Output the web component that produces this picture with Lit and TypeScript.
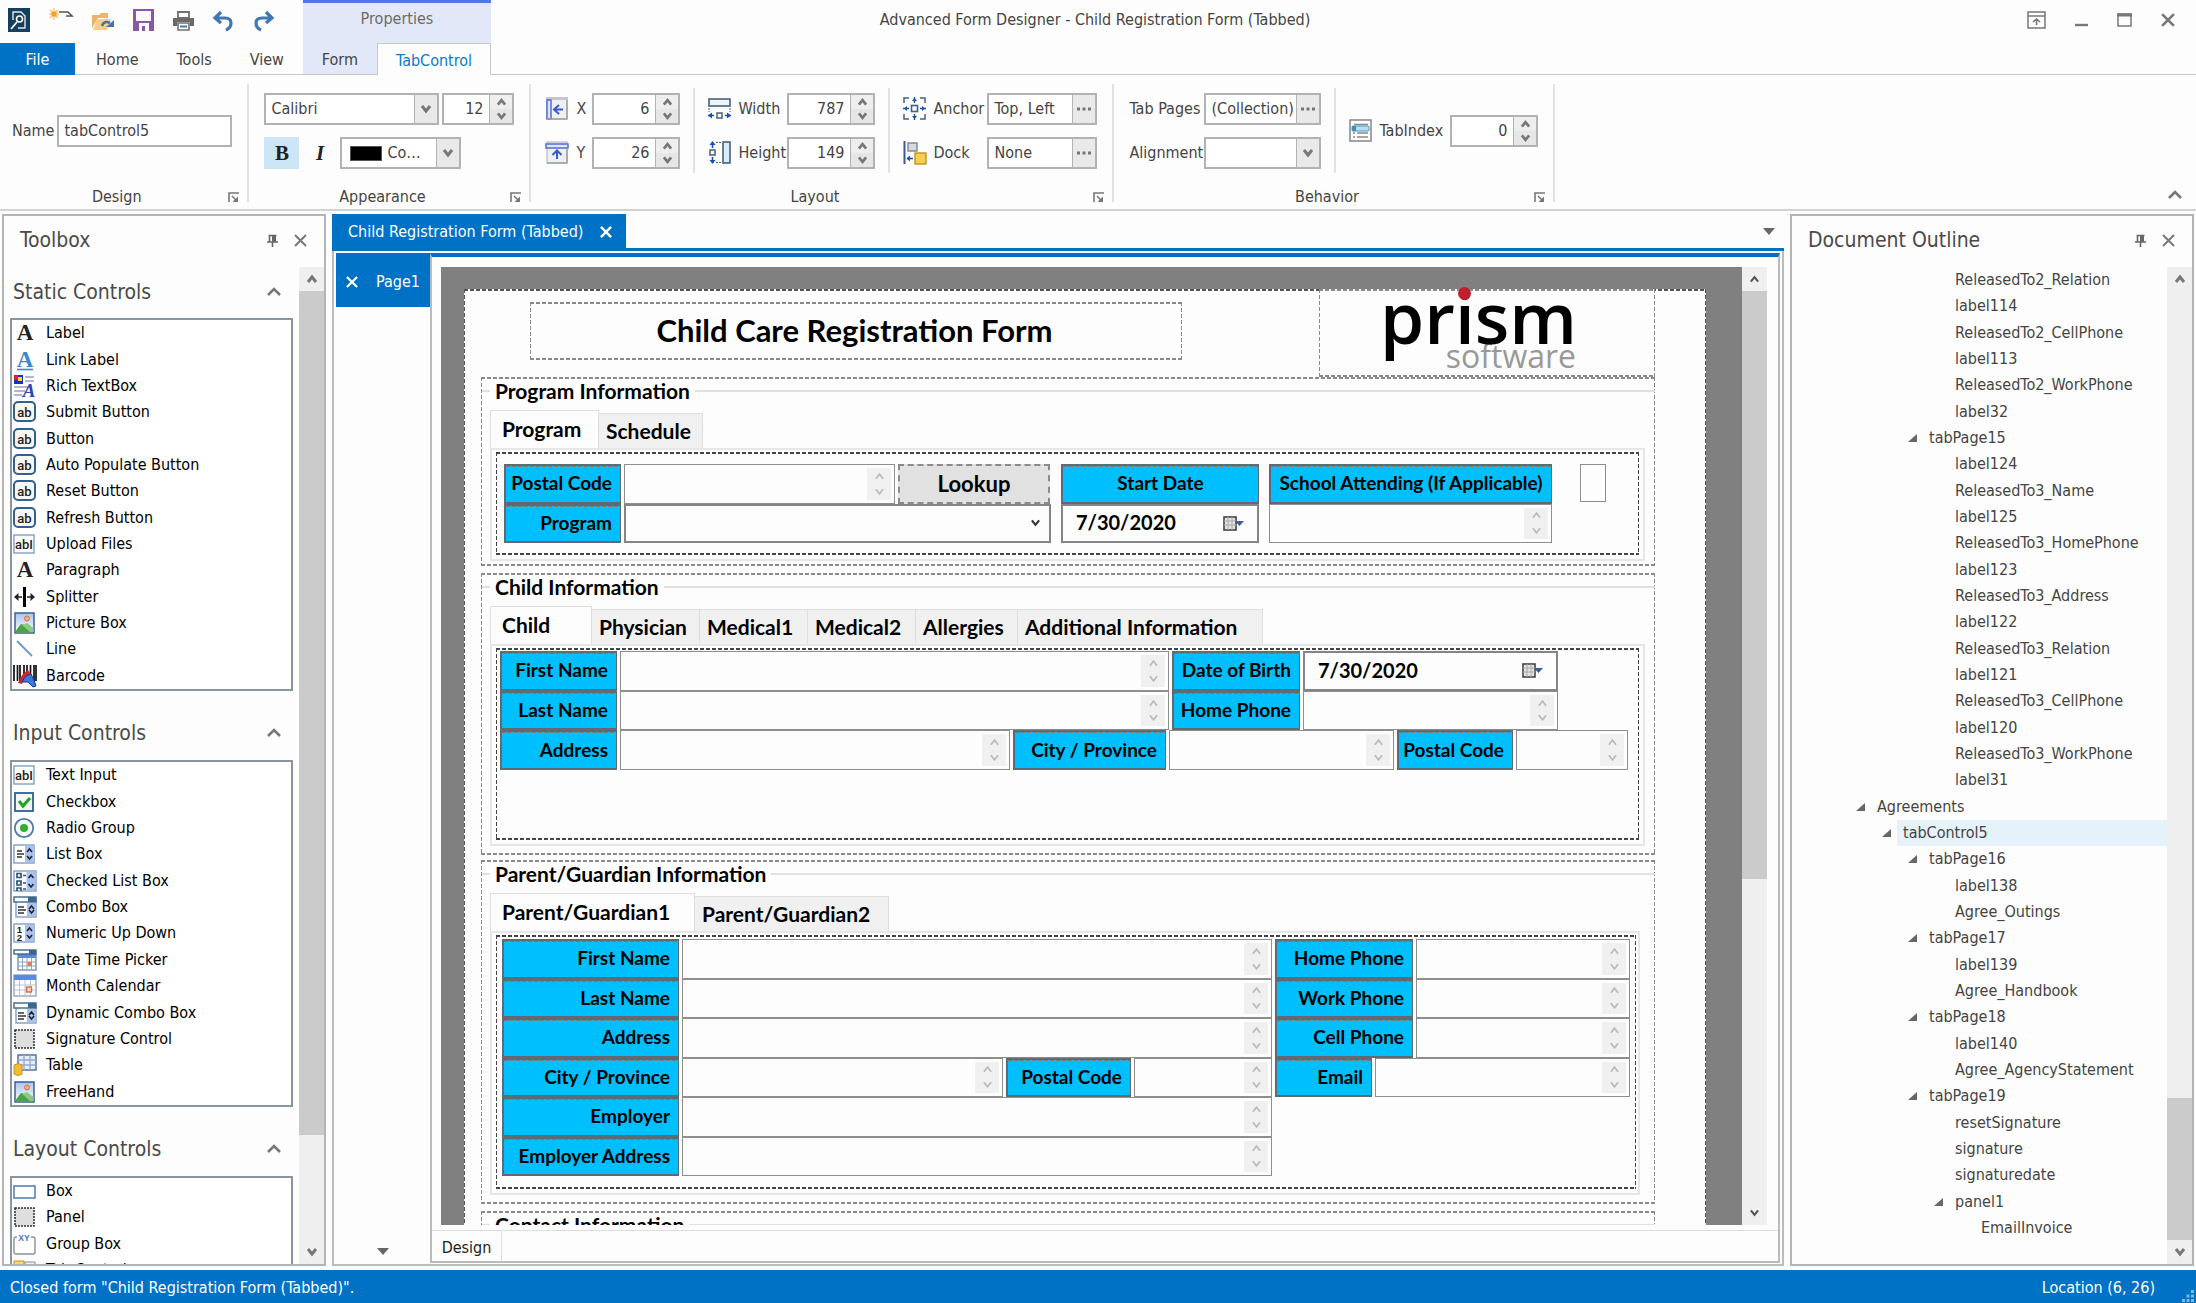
import { LitElement, html, svg, css, TemplateResult } from "lit";
import { customElement } from "lit/decorators.js";
import { classMap } from "lit/directives/class-map.js";

const base = css`
  * { box-sizing: border-box; }
  :host {
    --ui: "DejaVu Sans Condensed", "Noto Sans", sans-serif;
    --form: Lato, "Noto Sans", sans-serif;
    --blue: #0072c6;
    font-family: var(--ui);
    font-size: 16px;
    line-height: 20px;
    color: #444;
  }
  button, input, select {
    font: inherit;
    color: inherit;
    margin: 0;
    padding: 0;
    border: 0;
    border-radius: 0;
    background: none;
    min-width: 0;
    outline: none;
  }
  button { display: flex; align-items: center; justify-content: center; }
  select { appearance: none; }
  svg { display: block; flex: none; overflow: visible; }
  ul { list-style: none; margin: 0; padding: 0; }
  h1, h2, h3 { margin: 0; font: inherit; }
`;

const icon = (w: number, h: number, body: unknown, vb = `0 0 ${w} ${h}`) =>
  html`<svg width=${w} height=${h} viewBox=${vb} fill="none" aria-hidden="true">${body}</svg>`;

const chevron = (dir: "up" | "down", w = 10, color = "#777", sw = 3) =>
  icon(w, 8, dir === "up"
    ? svg`<path d="M1 7 L5 2 L9 7" stroke=${color} stroke-width=${sw} />`
    : svg`<path d="M1 1 L5 6 L9 1" stroke=${color} stroke-width=${sw} />`, "0 0 10 8");

const closeX = (color = "#777", s = 13, w = 2) =>
  icon(s, s, svg`<path d="M1 1 L12 12 M12 1 L1 12" stroke=${color} stroke-width=${w} />`, "0 0 13 13");

const pin = () => icon(11, 13, svg`<path d="M2.500 1 V8 M1.500 1.500 H9.500 M0 8 H11 M5.500 8 V13" stroke="#666" stroke-width="1.6"/><path d="M5 1 H9 V8 H5 Z" fill="#666"/>`);

const wideCaret = (dir: "up" | "down") =>
  icon(14, 9, dir === "up"
    ? svg`<path d="M1 8 L7 2 L13 8" stroke="#777" stroke-width="2.6"/>`
    : svg`<path d="M1 1 L7 7 L13 1" stroke="#777" stroke-width="2.6"/>`);

const scrollCss = css`
  .scroll { width: 25px; background: #efefef; display: flex; flex-direction: column; flex: none; }
  .scroll button { height: 24px; width: 100%; flex: none; }
  .track { flex: 1; display: flex; flex-direction: column; min-height: 0; }
  .thumb { background: #cbcbcb; }
  .panel { border: 2px solid #b4b4b4; background: #fdfdfd; display: flex; flex-direction: column; min-height: 0; }
  .panel-head { height: 51px; display: flex; align-items: center; padding: 0 17px 3px 16px; gap: 16px; flex: none; }
  .panel-head h2 { flex: 1; font-size: 21px; line-height: 28px; color: #4a4a4a; }
  .panel-body { flex: 1; display: flex; min-height: 0; }
`;

/* ---------- Ribbon ---------- */

const ribbonIcons = {
  app: icon(22, 24, svg`<rect width="22" height="24" fill="#14405f"/><path d="M5 12 V4 H13 L17 8 V20 H10" stroke="#dfe8ee" stroke-width="1.4"/><circle cx="11.500" cy="11" r="3" stroke="#fff" stroke-width="1.6"/><path d="M9 14 L3 21" stroke="#fff" stroke-width="1.8"/>`),
  fresh: icon(24, 24, svg`<path d="M10 4 H19 L23 8 H17" stroke="#555" stroke-width="1.6"/><path d="M1 2 L9 10 M9 2 L1 10 M5 0 V12 M0 6 H10" stroke="#fcc77a" stroke-width="1.4"/><rect x="2.500" y="3.500" width="5" height="5" fill="#f9a01e"/>`),
  open: icon(22, 21, svg`<path d="M0 18 V5 H7 L9 3 H16 V8 H6 Z" fill="#e9b566"/><path d="M1 20 L5 9 H19 L15 20 Z" fill="#f7cf8b"/><path d="M10 16 Q12 10 18 13" stroke="#3f77ad" stroke-width="2.600"/><path d="M14 17 H22 V10 Z" fill="#3f77ad"/>`),
  save: icon(21, 22, svg`<path d="M0 0 H21 V22 H0 Z M3 2 V12 H18 V2 Z M6 14 V22 H9 V17 H12 V22 H16 V14 Z" fill="#8a56a6" fill-rule="evenodd"/><path d="M3 2 H18 V12 H3 Z" fill="#fbf7fd"/>`),
  print: icon(21, 21, svg`<path d="M5 2 H16 V8 H5 Z" stroke="#707070" stroke-width="1.8" fill="#fff"/><path d="M0 8 H21 V16 H17 V12 H4 V16 H0 Z" fill="#6a6a6a"/><path d="M5 13 H16 V20 H5 Z" stroke="#707070" stroke-width="1.6" fill="#fff"/><path d="M7 16.500 H14" stroke="#3f77ad" stroke-width="2"/>`),
  undo: icon(21, 21, svg`<path d="M8 2 L2 8 L8 13 M2 8 H12 Q18 8 18 13 Q18 18 13 20" stroke="#3f77b4" stroke-width="3.200"/>`),
  redo: icon(21, 21, svg`<path d="M13 2 L19 8 L13 13 M19 8 H9 Q3 8 3 13 Q3 18 8 20" stroke="#3f77b4" stroke-width="3.200"/>`),
  x: icon(22, 23, svg`<rect x="1" y="1" width="20" height="21" fill="#eef0f4" stroke="#a9adb5"/><rect x="0" y="0" width="22" height="3" fill="#c3c6cc"/><rect x="1" y="3" width="4" height="19" fill="#dfe7ff" stroke="#4a63d6" stroke-width="1.4"/><path d="M17 12.500 H9 M13 8 L8 12.500 L13 17" stroke="#3a5bd0" stroke-width="2"/><path d="M1 22 H21 V3" stroke="#9da1a8" stroke-width="1.5"/>`),
  y: icon(22, 23, svg`<rect x="1" y="1" width="20" height="21" fill="#eef0f4" stroke="#a9adb5"/><rect x="0" y="3" width="22" height="4" fill="#dfe7ff" stroke="#4a63d6" stroke-width="1.4"/><path d="M11 18 V10 M6.500 14 L11 9.500 L15.500 14" stroke="#3a5bd0" stroke-width="2"/><path d="M1 22 H21 V7" stroke="#9da1a8" stroke-width="1.5"/>`),
  width: icon(23, 22, svg`<rect x="1" y="1" width="21" height="7" fill="#eef6fb" stroke="#45617c" stroke-width="1.6"/><path d="M1 10 V14 M22 10 V14" stroke="#45617c" stroke-dasharray="2 1"/><rect x="9" y="15" width="5" height="5" stroke="#45617c" stroke-width="1.5"/><path d="M0 17.500 H6 M17 17.500 H23" stroke="#1c4fb5" stroke-width="1.6"/><path d="M4 14.500 L0 17.500 L4 20.500 Z M19 14.500 L23 17.500 L19 20.500 Z" fill="#1c4fb5"/>`),
  height: icon(23, 23, svg`<rect x="15" y="1" width="7" height="21" fill="#d8ecf8" stroke="#45617c" stroke-width="1.6"/><path d="M8 1.500 H13 M8 21.500 H13" stroke="#45617c" stroke-dasharray="2 1"/><rect x="2" y="9" width="5" height="5" stroke="#45617c" stroke-width="1.5"/><path d="M4.500 1 V7 M4.500 16 V22" stroke="#1c4fb5" stroke-width="1.6"/><path d="M1.500 4 L4.500 0 L7.500 4 Z M1.500 19 L4.500 23 L7.500 19 Z" fill="#1c4fb5"/>`),
  anchor: icon(23, 23, svg`<path d="M1 6 V1 H6 M17 1 H22 V6 M22 17 V22 H17 M6 22 H1 V17" stroke="#45617c" stroke-width="1.5"/><rect x="8.500" y="8.500" width="6" height="6" stroke="#45617c" stroke-width="1.6"/><path d="M11.500 0 V6 M11.500 17 V23 M0 11.500 H6 M17 11.500 H23" stroke="#1c4fb5" stroke-width="1.4"/><path d="M9 4 L11.500 1 L14 4 Z M9 19 L11.500 22 L14 19 Z M4 9 L1 11.500 L4 14 Z M19 9 L22 11.500 L19 14 Z" fill="#1c4fb5"/>`),
  dock: icon(23, 23, svg`<path d="M1.500 0 V23" stroke="#3a5b8c" stroke-width="2"/><rect x="5" y="2" width="9" height="8" fill="#d6dade" stroke="#7b838c" stroke-width="1.4"/><rect x="12" y="12" width="11" height="11" fill="#f6cf4c" stroke="#bf9222" stroke-width="1.4"/><path d="M4 17.500 H10" stroke="#1c4fb5" stroke-width="1.6"/><path d="M7 14.500 L3.500 17.500 L7 20.500 Z" fill="#1c4fb5"/>`),
  tabIndex: icon(23, 23, svg`<rect x="1" y="1" width="21" height="21" fill="#fff" stroke="#8d8d8d" stroke-width="1.6"/><path d="M5 5.500 H19 M4 14 H6 M4 18 H6 M8 14 H19 M8 18 H19" stroke="#888" stroke-width="1.6"/><rect x="3" y="7" width="17" height="5" rx="1" fill="#b9def0" stroke="#4a97c4"/><rect x="3" y="7" width="4" height="5" fill="#3b8fc4"/>`),
};

const launcher = (name: string) => html`<button aria-label=${name + " options"}>
  ${icon(11, 11, svg`<path d="M1 10 V1 H11" stroke="#777" stroke-width="1.6"/><path d="M4 4 L9 9" stroke="#777" stroke-width="1.5"/><path d="M10 4.500 V10 H4.500 Z" fill="#777"/>`)}</button>`;

const dots = () => icon(14, 4, svg`<path d="M0 .5 h3 v3 h-3 Z M5.500 .5 h3 v3 h-3 Z M11 .5 h3 v3 h-3 Z" fill="#777"/>`);

@customElement("ribbon-bar")
class RibbonBar extends LitElement {
  static styles = [base, css`
    :host { display: block; background: #fdfdfd; }
    .top { display: grid; grid-template-columns: auto auto 1fr; grid-template-rows: 43px 32px; }
    .quick { grid-area: 1 / 1; display: flex; gap: 19px; padding-left: 8px; align-items: center; }
    .quick button { padding-bottom: 3px; }
    .caption { grid-area: 1 / 1 / 2 / 4; justify-self: center; align-self: center; padding: 0 6px 3px 0; pointer-events: none; }
    .win { grid-area: 1 / 3; justify-self: end; display: flex; align-items: center; gap: 29px; padding: 0 21px 3px 0; }
    .ctx { grid-area: 1 / 2; background: #e3e8f9; border-top: 3px solid #4f78e4; display: flex; align-items: center; justify-content: center; padding-bottom: 8px; color: #6a6a6a; }
    .tabs { display: flex; border-bottom: 1px solid #c8c8c8; }
    .tabs button { padding: 3px 19px 0; }
    .tabs .file { background: var(--blue); color: #fff; width: 75px; padding: 2px 0 0; margin: 0 2px -1px 0; }
    .tabs.context button { background: #e3e8f9; }
    .tabs.context .on { background: #fdfdfd; color: #0a7bcb; border: 1px solid #c8c8c8; border-bottom: 0; margin-bottom: -1px; padding: 2px 18px 0; }
    .body { display: flex; height: 136px; border-bottom: 2px solid #d2d2d2; }
    .group { display: flex; flex-direction: column; }
    .rule { width: 2px; background: #e2e2e2; margin: 9px 0 7px; }
    .controls { flex: 1; display: flex; align-items: center; gap: 13px; padding: 2px 15px 0; }
    .foot { height: 25px; display: flex; align-items: center; padding: 1px 8px 0 5px; }
    .foot span { flex: 1; text-align: center; }
    .sep { width: 2px; height: 85px; background: #e2e2e2; }
    .rows { display: grid; row-gap: 12px; align-items: center; grid-auto-rows: 32px; }
    .rows.xy { grid-template-columns: 30px 16px 88px; }
    .rows.size { grid-template-columns: 30px 49px 88px; }
    .rows.place { grid-template-columns: 30px 54px 110px; }
    .rows.pages { grid-template-columns: 75px 117px; }
    .rows.index { grid-template-columns: 30px 71px 88px; }
    .line { display: flex; gap: 3px; }
    .design { gap: 3px; padding-left: 12px; }
    .field { display: flex; height: 32px; border: 2px solid #b2b2b2; background: #fff; }
    .field input { flex: 1; width: 0; padding: 0 0 0 5px; }
    .field.num input { text-align: right; padding-right: 6px; }
    .field .drop { width: 23px; flex: none; background: #e9e9e9; border-left: 1px solid #b2b2b2; }
    .field.name { width: 175px; }
    .field.font { width: 175px; }
    .field.pt { width: 72px; }
    .field.color { width: 121px; align-items: stretch; }
    .swatch { width: 32px; height: 15px; background: #000; border: 1px solid #555; margin: 7px 0 0 8px; flex: none; }
    .spin { width: 23px; flex: none; border-left: 1px solid #b2b2b2; display: flex; flex-direction: column; }
    .spin button { flex: 1; background: #eee; }
    .spin button + button { background: #e6e6e6; }
    .style { width: 35px; height: 32px; font: bold 21px/24px "Liberation Serif", serif; color: #222; }
    .style.on { background: #cce6f5; }
    .style.it { font-style: italic; }
    .end { flex: 1; display: flex; justify-content: flex-end; align-items: flex-end; padding: 0 14px 10px 0; }
  `];

  private num(id: string, value: string, cls = "") {
    return html`<div class="field num ${cls}"><input id=${id} .value=${value} aria-label=${id} />
      <div class="spin"><button aria-label="Increase">${chevron("up", 9)}</button><button aria-label="Decrease">${chevron("down", 9)}</button></div></div>`;
  }
  private pick(id: string, value: string, cls: string, glyph: TemplateResult) {
    return html`<div class="field ${cls}"><input id=${id} .value=${value} aria-label=${id} /><button class="drop" aria-label="Choose">${glyph}</button></div>`;
  }
  private group(name: string, controls: TemplateResult, cls = "") {
    return html`<section class="group"><div class="controls ${cls}">${controls}</div>
      <div class="foot"><span>${name}</span>${launcher(name)}</div></section><div class="rule"></div>`;
  }

  render() {
    const i = ribbonIcons;
    const quick: [string, TemplateResult][] = [["Application", i.app], ["New", i.fresh], ["Open", i.open], ["Save", i.save], ["Print", i.print], ["Undo", i.undo], ["Redo", i.redo]];
    return html`
      <header class="top">
        <div class="quick">${quick.map(([n, g]) => html`<button aria-label=${n}>${g}</button>`)}</div>
        <div class="ctx">Properties</div>
        <h1 class="caption">Advanced Form Designer - Child Registration Form (Tabbed)</h1>
        <div class="win">
          <button aria-label="Ribbon display">${icon(19, 18, svg`<path d="M1 1 H18 V17 H1 Z M1 5 H18" stroke="#777" stroke-width="1.5"/><path d="M9.500 14 V8 M6 11 L9.500 8 L13 11" stroke="#777" stroke-width="1.6"/>`)}</button>
          <button aria-label="Minimize">${icon(13, 14, svg`<path d="M0 12 H13" stroke="#777" stroke-width="2.4"/>`)}</button>
          <button aria-label="Maximize">${icon(15, 14, svg`<path d="M1 1 H14 V13 H1 Z" stroke="#777" stroke-width="1.5"/><path d="M0 2 H15" stroke="#777" stroke-width="3"/>`)}</button>
          <button aria-label="Close">${closeX("#777", 14, 2.4)}</button>
        </div>
        <nav class="tabs"><button class="file">File</button><button>Home</button><button>Tools</button><button>View</button></nav>
        <nav class="tabs context"><button>Form</button><button class="on">TabControl</button></nav>
        <div class="tabs"></div>
      </header>
      <div class="body">
        ${this.group("Design", html`<label for="Name">Name</label><div class="field name"><input id="Name" .value=${"tabControl5"} /></div>`, "design")}
        ${this.group("Appearance", html`<div class="rows">
          <div class="line">${this.pick("Font", "Calibri", "font", chevron("down"))}${this.num("FontSize", "12", "pt")}</div>
          <div class="line"><button class="style on">B</button><button class="style it">I</button>
            <div class="field color"><span class="swatch"></span><input aria-label="Color" .value=${"Co…"} /><button class="drop" aria-label="Choose">${chevron("down")}</button></div></div>
        </div>`)}
        ${this.group("Layout", html`
          <div class="rows xy">${i.x}<label for="X">X</label>${this.num("X", "6")}${i.y}<label for="Y">Y</label>${this.num("Y", "26")}</div>
          <div class="sep"></div>
          <div class="rows size">${i.width}<label for="Width">Width</label>${this.num("Width", "787")}${i.height}<label for="Height">Height</label>${this.num("Height", "149")}</div>
          <div class="sep"></div>
          <div class="rows place">${i.anchor}<label for="Anchor">Anchor</label>${this.pick("Anchor", "Top, Left", "", dots())}${i.dock}<label for="Dock">Dock</label>${this.pick("Dock", "None", "", dots())}</div>`)}
        ${this.group("Behavior", html`
          <div class="rows pages"><label for="TabPages">Tab Pages</label>${this.pick("TabPages", "(Collection)", "", dots())}<label for="Alignment">Alignment</label>${this.pick("Alignment", "", "", chevron("down"))}</div>
          <div class="sep"></div>
          <div class="rows index">${i.tabIndex}<label for="TabIndex">TabIndex</label>${this.num("TabIndex", "0")}</div>`)}
        <div class="end"><button aria-label="Collapse ribbon">${wideCaret("up")}</button></div>
      </div>`;
  }
}

/* ---------- Toolbox ---------- */

const abText = (t: string, x: number) => svg`<text x=${x} y="15.500" font-family="Roboto, sans-serif" font-size="13" font-weight="500" fill="#222" text-anchor="middle">${t}</text>`;
const serifA = (fill: string, extra: unknown = "") => icon(24, 22, svg`<text x="12" y="18" font-family="Liberation Serif, serif" font-size="23" font-weight="bold" fill=${fill} text-anchor="middle">A</text>${extra}`);
const updown = (x: number, y: number, h: number) => svg`<rect x=${x} y=${y} width="9" height=${h} fill="#a9c3ee"/><path d="M${x + 2} ${y + 6} l2.500 -3 l2.500 3 M${x + 2} ${y + h - 6} l2.500 3 l2.500 -3" stroke="#223" stroke-width="1.6"/>`;
const frame = (b: unknown) => icon(24, 22, svg`<rect x="1" y="2" width="20" height="18" fill="#fff" stroke="#7f9fc6" stroke-width="1.4"/>${b}`);
const combo = () => icon(24, 22, svg`<rect x="3" y="3" width="20" height="18" fill="#fff" stroke="#7f9fc6" stroke-width="1.4"/><rect x="1" y="1" width="22" height="5" fill="#fff" stroke="#3b678f" stroke-width="1.4"/><rect x="15" y="1" width="8" height="5" fill="#3b678f"/><path d="M5 11 H11 M5 14 H13 M5 17 H11" stroke="#333" stroke-width="1.4"/>${updown(14, 7, 13)}`);
const picture = () => icon(24, 22, svg`<defs><linearGradient id="sky" x2="0" y2="1"><stop stop-color="#a9c4f0"/><stop offset="1" stop-color="#fff"/></linearGradient></defs><rect x="2" y="1" width="19" height="20" fill="url(#sky)" stroke="#3b5f9c" stroke-width="1.5"/><circle cx="14" cy="6.500" r="2.500" fill="#f2b083" stroke="#d9703a"/><path d="M2.500 19 L8 12 L12 13 L20 20.500 H2.500 Z" fill="#4aa345"/><path d="M9 13 L14 11 L20.500 16 V20 H17 Z" fill="#8acb80"/>`);
const hatch = () => icon(24, 22, svg`<rect x="2" y="2" width="19" height="18" fill="#dedede" stroke="#333" stroke-width="1.6" stroke-dasharray="2 1"/>`);

const toolIcons: Record<string, () => TemplateResult> = {
  a: () => serifA("#222"),
  link: () => serifA("#3b86cf", svg`<path d="M4 20.500 H20" stroke="#3b86cf" stroke-width="1.6"/>`),
  rich: () => icon(24, 24, svg`<rect x="1" y="1" width="9" height="9" fill="#1a2ed0"/><rect x="1" y="1" width="4" height="5" fill="#d22"/><rect x="5" y="3" width="4" height="4" fill="#ffd92e"/><path d="M12 3 H21 M12 7 H21 M1 13 H15 M1 17 H12 M1 21 H9" stroke="#9aa0b8" stroke-width="1.6"/><text x="16" y="23" font-family="Liberation Serif, serif" font-size="19" font-style="italic" font-weight="bold" fill="#2c44b5" text-anchor="middle">A</text>`),
  ab: () => icon(24, 22, svg`<rect x="1" y="1" width="21" height="19" rx="4" fill="#f7f6f2" stroke="#2f6191" stroke-width="2"/>${abText("ab", 11.5)}`),
  abl: () => frame(abText("abI", 11)),
  split: () => icon(24, 22, svg`<path d="M11.500 1 V21" stroke="#000" stroke-width="3"/><path d="M2 11 H9 M14 11 H21" stroke="#222" stroke-width="1.6"/><path d="M5.500 7 L1 11 L5.500 15 Z M17.500 7 L22 11 L17.500 15 Z" fill="#222"/>`),
  picture,
  line: () => icon(24, 22, svg`<path d="M4 3 L19 18" stroke="#6d97c7" stroke-width="1.8"/>`),
  barcode: () => icon(24, 24, svg`<path d="M1 1 V17 M4.500 1 V17 M7 1 V17 M11 1 V17 M14 1 V17 M17.500 1 V17 M21 1 V17 M23 1 V17" stroke="#111" stroke-width="1.7"/><path d="M5 19 Q9 9 15 6 L18 10 Q11 13 9 20 Z" fill="#d8232a"/><path d="M9 18 Q12 11 18 10 L21 16 L23 22 L20 23 L15 18 Z" fill="#3a78e0" stroke="#123a86"/>`),
  check: () => icon(24, 22, svg`<rect x="2" y="2" width="18" height="18" fill="#f4f8f4" stroke="#2f5f8f" stroke-width="1.8"/><path d="M6 10 L10 15 L17 7" stroke="#27a227" stroke-width="3.2"/>`),
  radio: () => icon(24, 22, svg`<circle cx="11" cy="11" r="9.200" fill="#f6f9fc" stroke="#4f7ba6" stroke-width="1.8"/><circle cx="11" cy="11" r="4" fill="#2fae2f"/>`),
  list: () => frame(svg`<path d="M4 8 H9 M4 11 H11 M4 14 H9" stroke="#333" stroke-width="1.6"/>${updown(12, 3, 16)}`),
  checklist: () => icon(24, 22, svg`<rect x="1" y="1" width="22" height="20" fill="#fff" stroke="#7f9fc6" stroke-width="1.4"/><path d="M4 3.500 h4 v4 h-4 Z M4 11 h4 v4 h-4 Z M4 21 v-3 h4 v3 M10 5.500 h3 M10 13 h3 M10 19 h3" stroke="#2c5478" stroke-width="1.7"/>${updown(13.5, 2, 18)}`),
  combo,
  numeric: () => frame(svg`<text x="6.500" y="10.500" font-family="Liberation Sans" font-size="9.500" font-weight="bold" fill="#222" text-anchor="middle">1</text><text x="6.500" y="19" font-family="Liberation Sans" font-size="9.500" font-weight="bold" fill="#222" text-anchor="middle">2</text>${updown(12, 3, 16)}`),
  date: () => icon(24, 22, svg`<rect x="5" y="5" width="18" height="16" fill="#fff" stroke="#7590b8" stroke-width="1.4"/><rect x="5" y="5" width="18" height="4" fill="#5a8ae0"/><path d="M5 13 H23 M5 17 H23 M9.500 9 V21 M14 9 V21 M18.500 9 V21" stroke="#8fa5c8"/><rect x="14.500" y="13" width="4" height="4" fill="#e07a50"/><rect x="1" y="1" width="22" height="4" fill="#fff" stroke="#3b678f" stroke-width="1.4"/><rect x="16" y="1" width="7" height="4" fill="#3b678f"/>`),
  month: () => icon(24, 24, svg`<rect x="1" y="1" width="22" height="21" fill="#fff" stroke="#8fa5c8" stroke-width="1.4"/><rect x="1" y="1" width="22" height="5" fill="#5a8ae0"/><path d="M1 11 H23 M1 16 H23 M6.500 6 V22 M12 6 V22 M17.500 6 V22" stroke="#b4c4e0"/><rect x="13.500" y="13" width="5" height="5" fill="#fbd5c4" stroke="#e06a40" stroke-width="1.4"/>`),
  hatch,
  table: () => icon(24, 22, svg`<rect x="5" y="1" width="18" height="15" fill="#e8eef8" stroke="#5d7ba8" stroke-width="1.6"/><path d="M5 6 H23 M5 11 H23 M11 1 V16 M17 1 V16" stroke="#93a9cd" stroke-width="1.3"/><path d="M1 11 Q5 8 9 11 V20 Q5 23 1 20 Z" fill="#f0bd31" stroke="#c8942a"/>`),
  box: () => icon(24, 22, svg`<rect x="1" y="6" width="21" height="12" fill="#fff" stroke="#4a7cb0" stroke-width="1.5"/>`),
  groupBox: () => icon(24, 22, svg`<rect x="1" y="4" width="21" height="17" rx="2" stroke="#8a9199" stroke-width="1.4"/><rect x="4" y="0" width="14" height="9" fill="#fff"/><text x="11" y="8" font-family="Liberation Sans" font-size="8.500" font-weight="bold" fill="#3b73d6" text-anchor="middle">XY</text>`),
  tab: () => icon(24, 22, svg`<rect x="1" y="7" width="21" height="14" fill="#fff" stroke="#8a9199" stroke-width="1.4"/><rect x="1" y="2" width="10" height="6" fill="#f7d774" stroke="#b9952e"/><rect x="12" y="3" width="10" height="5" fill="#eee" stroke="#8a9199"/>`),
};

const tools: { name: string; cls: string; items: [string, string][] }[] = [
  { name: "Static Controls", cls: "static", items: [["a", "Label"], ["link", "Link Label"], ["rich", "Rich TextBox"], ["ab", "Submit Button"], ["ab", "Button"], ["ab", "Auto Populate Button"], ["ab", "Reset Button"], ["ab", "Refresh Button"], ["abl", "Upload Files"], ["a", "Paragraph"], ["split", "Splitter"], ["picture", "Picture Box"], ["line", "Line"], ["barcode", "Barcode"]] },
  { name: "Input Controls", cls: "entry", items: [["abl", "Text Input"], ["check", "Checkbox"], ["radio", "Radio Group"], ["list", "List Box"], ["checklist", "Checked List Box"], ["combo", "Combo Box"], ["numeric", "Numeric Up Down"], ["date", "Date Time Picker"], ["month", "Month Calendar"], ["combo", "Dynamic Combo Box"], ["hatch", "Signature Control"], ["table", "Table"], ["picture", "FreeHand"]] },
  { name: "Layout Controls", cls: "arrange", items: [["box", "Box"], ["hatch", "Panel"], ["groupBox", "Group Box"], ["tab", "Tab Control"]] },
];

@customElement("tool-box")
class ToolBox extends LitElement {
  static styles = [base, scrollCss, css`
    :host { display: flex; }
    .panel { width: 324px; }
    .sections { flex: 1; overflow: hidden; padding: 0 6px 0 6px; }
    .head { width: 100%; height: 69px; padding: 14px 12px 0 3px; justify-content: space-between; font-size: 21px; line-height: 28px; color: #4a4a4a; }
    section:first-child .head { height: 51px; padding-top: 0; padding-bottom: 2px; }
    .list { display: grid; grid-auto-rows: 1fr; border: 2px solid #8b95a1; background: #fff; color: #000; }
    .static { height: 373px; }
    .entry { height: 347px; }
    .arrange { height: 109px; }
    .list li { display: flex; align-items: center; gap: 9px; padding-left: 1px; min-height: 0; }
    .thumb { flex: 844; }
    .rest { flex: 105; }
  `];
  render() {
    return html`<aside class="panel">
      <div class="panel-head"><h2>Toolbox</h2><button aria-label="Pin">${pin()}</button><button aria-label="Close">${closeX()}</button></div>
      <div class="panel-body">
        <div class="sections">${tools.map((s) => html`<section>
          <button class="head"><span>${s.name}</span>${wideCaret("up")}</button>
          <ul class="list ${s.cls}">${s.items.map(([i, t]) => html`<li>${toolIcons[i]()}<span>${t}</span></li>`)}</ul></section>`)}</div>
        <div class="scroll"><button aria-label="Scroll up">${chevron("up")}</button><div class="track"><div class="thumb"></div><div class="rest"></div></div><button aria-label="Scroll down">${chevron("down")}</button></div>
      </div></aside>`;
  }
}

/* ---------- Document outline ---------- */

const outline: [number, string][] = [
  [4, "ReleasedTo2_Relation"], [4, "label114"], [4, "ReleasedTo2_CellPhone"], [4, "label113"], [4, "ReleasedTo2_WorkPhone"], [4, "label32"],
  [3, "tabPage15"], [4, "label124"], [4, "ReleasedTo3_Name"], [4, "label125"], [4, "ReleasedTo3_HomePhone"], [4, "label123"], [4, "ReleasedTo3_Address"],
  [4, "label122"], [4, "ReleasedTo3_Relation"], [4, "label121"], [4, "ReleasedTo3_CellPhone"], [4, "label120"], [4, "ReleasedTo3_WorkPhone"], [4, "label31"],
  [1, "Agreements"], [2, "tabControl5"], [3, "tabPage16"], [4, "label138"], [4, "Agree_Outings"], [3, "tabPage17"], [4, "label139"], [4, "Agree_Handbook"],
  [3, "tabPage18"], [4, "label140"], [4, "Agree_AgencyStatement"], [3, "tabPage19"], [4, "resetSignature"], [4, "signature"], [4, "signaturedate"], [4, "panel1"], [5, "EmailInvoice"],
];
const parents = /^(tab|Agreements|panel)/;

@customElement("doc-outline")
class DocOutline extends LitElement {
  static styles = [base, scrollCss, css`
    :host { display: flex; }
    .panel { width: 404px; }
    .tree { flex: 1; display: grid; grid-auto-rows: 1fr; padding-bottom: 23px; }
    .tree li { display: flex; align-items: center; min-height: 0; }
    .l1 { padding-left: 64px; } .l2 { padding-left: 90px; } .l3 { padding-left: 116px; } .l4 { padding-left: 142px; } .l5 { padding-left: 168px; }
    .mark { width: 15px; flex: none; }
    .text { padding-left: 6px; height: 100%; display: flex; align-items: center; }
    .sel .text { flex: 1; background: #e5f2fa; }
    .rest { flex: 806; }
    .thumb { flex: 142; }
  `];
  render() {
    return html`<aside class="panel">
      <div class="panel-head"><h2>Document Outline</h2><button aria-label="Pin">${pin()}</button><button aria-label="Close">${closeX()}</button></div>
      <div class="panel-body">
        <ul class="tree" role="tree">${outline.map(([l, t]) => html`<li role="treeitem" class=${classMap({ ["l" + l]: true, sel: t === "tabControl5" })}>
          <span class="mark">${parents.test(t) ? icon(9, 8, svg`<path d="M9 0 V8 H0 Z" fill="#666"/>`) : ""}</span><span class="text">${t}</span></li>`)}</ul>
        <div class="scroll"><button aria-label="Scroll up">${chevron("up")}</button><div class="track"><div class="rest"></div><div class="thumb"></div></div><button aria-label="Scroll down">${chevron("down")}</button></div>
      </div></aside>`;
  }
}

/* ---------- Form canvas ---------- */

@customElement("form-canvas")
class FormCanvas extends LitElement {
  static styles = [base, scrollCss, css`
    :host { display: flex; flex-direction: column; min-width: 0; min-height: 0; }
    .doc-tabs { display: flex; align-items: stretch; justify-content: space-between; height: 37px; border-bottom: 3px solid var(--blue); padding-right: 9px; flex: none; }
    .doc-tab { background: var(--blue); color: #fff; display: flex; align-items: center; gap: 17px; padding: 2px 14px 0 16px; }
    .outer { flex: 1; min-height: 0; border: 2px solid #bbb; border-top: 0; padding: 2px 2px 1px 2px; display: flex; }
    .pages { width: 94px; flex: none; border-top: 4px solid var(--blue); display: flex; flex-direction: column; justify-content: space-between; align-items: center; padding-bottom: 8px; }
    .page-tab { width: 100%; height: 50px; background: var(--blue); color: #fff; gap: 18px; }
    .inner { flex: 1; min-width: 0; border: 2px solid #bbb; border-top: 4px solid var(--blue); display: flex; flex-direction: column; }
    .view { flex: 1; min-height: 0; display: flex; padding: 10px 11px 5px 9px; }
    .gray { flex: 1; min-width: 0; overflow: hidden; background: #808080; padding: 22px 0 0 23px; }
    .thumb { flex: 587; } .rest { flex: 322; }
    .bottom { height: 31px; flex: none; border-top: 1px solid #ddd; display: flex; }
    .bottom button { width: 70px; border-right: 1px solid #ddd; color: #222; padding-top: 3px; }

    .dash {
      --c: #8a8a8a; --w: 2px;
      background:
        repeating-linear-gradient(90deg, var(--c) 0 4px, transparent 4px 6px) top / 100% var(--w) no-repeat,
        repeating-linear-gradient(90deg, var(--c) 0 4px, transparent 4px 6px) bottom / 100% var(--w) no-repeat,
        repeating-linear-gradient(var(--c) 0 4px, transparent 4px 6px) left / 1px 100% no-repeat,
        repeating-linear-gradient(var(--c) 0 4px, transparent 4px 6px) right / 1px 100% no-repeat,
        #fdfdfd;
    }
    .sheet { width: 1242px; padding: 0 51px 0 17px; --c: #555; color: #000; font-family: var(--form); font-weight: bold; font-size: 19px; line-height: 24px; }
    .banner { display: flex; justify-content: space-between; padding-left: 49px; }
    .title { width: 652px; height: 58px; margin-top: 13px; padding: 0 3px 3px 0; font-size: 31px; line-height: 36px; display: flex; align-items: center; justify-content: center; }
    .logo { width: 336px; height: 88px; font-family: "Open Sans", sans-serif; text-align: right; padding-right: 78px; display: flex; flex-direction: column; }
    .prism { font-size: 71px; line-height: 55px; font-weight: 600; height: 52px; position: relative; flex: none; }
    .dot { position: absolute; top: -2px; right: 106px; width: 13px; height: 13px; border-radius: 50%; background: #c11f2e; }
    .soft { font-size: 32px; line-height: 30px; color: #999; font-weight: 400; padding-right: 1px; }
    .group { padding: 0 10px 0 9px; display: flex; flex-direction: column; }
    .group.g1 { height: 189px; margin-bottom: 7px; }
    .group.g2 { height: 282px; margin-bottom: 5px; }
    .group.g3 { height: 344px; margin-bottom: 7px; padding-right: 15px; }
    .group.g4 { height: 240px; }
    .legend { height: 29px; padding-bottom: 1px; display: flex; align-items: center; gap: 5px; margin: 0 -10px 0 -8px; flex: none; font-size: 21px; }
    .g3 .legend { margin-right: -15px; }
    .legend i { height: 2px; background: #e0e0e0; width: 8px; }
    .legend h3 + i { flex: 1; }
    .tabs { display: flex; height: 38px; margin-top: 4px; align-items: flex-end; flex: none; font-size: 21px; }
    .tabs button { height: 35px; background: #f0f0f0; border: 1px solid #dedede; border-width: 1px 1px 0 0; justify-content: flex-start; padding-left: 7px; }
    .tabs .on { height: 38px; background: #fdfdfd; border-left-width: 1px; padding: 0 0 2px 11px; }
    .w102 { width: 102px; } .w104 { width: 104px; } .w108 { width: 108px; } .w109 { width: 109px; } .w205 { width: 205px; } .w194 { width: 194px; } .w245 { width: 245px; }
    .tabpage { flex: 1; border: 2px solid #e6e6e6; padding: 2px 4px 4px; display: flex; margin-bottom: 9px; }
    .well { flex: 1; --c: #444; --w: 2px; }
    .g1 .well { display: flex; padding: 12px 8px; gap: 10px; align-items: flex-start; }
    .g2 .well { padding: 3px 4px; }
    .g3 .well { padding: 4px 6px; }
    .rows { display: grid; grid-auto-rows: 1fr; }
    .g1 .rows { height: 79px; }
    .g2 .rows { height: 119px; }
    .g3 .rows { height: 237px; }
    .row { display: grid; column-gap: 3px; min-height: 0; }
    .a1 { grid-template-columns: 117px 271px 152px; }
    .a2 { grid-template-columns: 117px 427px; }
    .b { width: 198px; } .c { width: 283px; }
    .c1 { grid-template-columns: 117px 549px 128px 255px; }
    .c3 { grid-template-columns: 117px 390px 153px 225px 116px 112px; }
    .p1 { grid-template-columns: 177px 590px 138px 214px; }
    .p4 { grid-template-columns: 177px 321px 125px 138px 97px 255px; }
    .tag {
      border: 2px solid #5f6b70; border-right-width: 1px;
      background: repeating-linear-gradient(90deg, #8b7468 0 4px, #00bfff 4px 6px) top / 100% 1px no-repeat, #00bfff;
      display: flex; align-items: center; justify-content: flex-end; padding: 0 8px 1px 0; white-space: nowrap; min-width: 0;
    }
    .mid { justify-content: center; padding: 0 0 1px; }
    .box { border: 1px solid #8e8e8e; background: #fdfdfd; display: flex; min-width: 0; }
    .box input, .box select { flex: 1; width: 0; padding-left: 13px; font-size: 20px; }
    .box input { padding-bottom: 2px; }
    .spin { width: 24px; background: #f0f0f0; margin: 3px 3px 3px 0; display: flex; flex-direction: column; flex: none; }
    .spin button { flex: 1; }
    .box.date { border: 2px solid #858585; }
    .pickdate { padding: 0 13px; }
    .lookup { background-color: #e1e1e1; border: 2px dashed #8a8a8a; font-size: 22px; }
    .arrow { width: 18px; display: flex; align-items: center; pointer-events: none; }
    .tiny { width: 26px; height: 38px; margin-left: 18px; flex: none; }
  `];

  private seq = 0;
  private area(label: string, id = "f" + this.seq++) {
    return html`<div class="box"><input id=${id} aria-label=${label} />
      <div class="spin"><button aria-label="Scroll up">${chevron("up", 9, "#bbb", 2)}</button><button aria-label="Scroll down">${chevron("down", 9, "#bbb", 2)}</button></div></div>`;
  }
  private pair(label: string, cls = "") {
    const id = "f" + this.seq++;
    return html`<label class="tag ${cls}" for=${id}>${label}</label>${this.area(label, id)}`;
  }
  private date(label: string, cls = "") {
    const id = "f" + this.seq++;
    return html`<label class="tag ${cls}" for=${id}>${label}</label><div class="box date"><input id=${id} .value=${"7/30/2020"} />
      <button class="pickdate" aria-label="Open calendar">${icon(21, 15, svg`<rect x="1" y="1" width="12" height="13" fill="#e3e3e3" stroke="#444" stroke-width="1.6"/><path d="M1 5 H13 M1 9 H13 M5 1 V14 M9 1 V14" stroke="#aaa"/><path d="M12 5 H21 L16.500 10 Z" fill="#3f5c96"/>`)}</button></div>`;
  }
  private group(n: number, title: string, tabs: [string, string][], body: TemplateResult) {
    return html`<section class="group dash g${n}"><div class="legend"><i></i><h3>${title}</h3><i></i></div>
      ${tabs.length ? html`<div class="tabs">${tabs.map(([t, w], k) => html`<button class="${w} ${k ? "" : "on"}">${t}</button>`)}</div>
      <div class="tabpage"><div class="well dash">${body}</div></div>` : ""}</section>`;
  }

  render() {
    this.seq = 0;
    return html`
      <div class="doc-tabs"><div class="doc-tab"><span>Child Registration Form (Tabbed)</span><button aria-label="Close document">${closeX("#fff", 12, 2.6)}</button></div>
        <button aria-label="Open documents">${icon(12, 7, svg`<path d="M0 0 H12 L6 7 Z" fill="#666"/>`)}</button></div>
      <div class="outer">
        <div class="pages"><button class="page-tab">${closeX("#fff", 12, 2.4)}<span>Page1</span></button>${icon(12, 7, svg`<path d="M0 0 H12 L6 7 Z" fill="#666"/>`)}</div>
        <div class="inner">
          <div class="view">
            <div class="gray"><div class="sheet dash">
              <div class="banner"><h2 class="title dash">Child Care Registration Form</h2>
                <div class="logo dash"><div class="prism">prism<span class="dot"></span></div><div class="soft">software</div></div></div>
              ${this.group(1, "Program Information", [["Program", "w109"], ["Schedule", "w104"]], html`
                <div class="rows"><div class="row a1">${this.pair("Postal Code")}<button class="lookup">Lookup</button></div>
                  <div class="row a2"><label class="tag" for="program">Program</label><div class="box date"><select id="program"></select><span class="arrow">${chevron("down", 9, "#333", 2.4)}</span></div></div></div>
                <div class="rows b">${this.date("Start Date", "mid")}</div>
                <div class="rows c">${this.pair("School Attending (If Applicable)", "mid")}</div>
                <div class="box tiny"></div>`)}
              ${this.group(2, "Child Information", [["Child", "w102"], ["Physician", "w108"], ["Medical1", "w108"], ["Medical2", "w108"], ["Allergies", "w102"], ["Additional Information", "w245"]], html`
                <div class="rows"><div class="row c1">${this.pair("First Name")}${this.date("Date of Birth")}</div>
                  <div class="row c1">${this.pair("Last Name")}${this.pair("Home Phone")}</div>
                  <div class="row c3">${this.pair("Address")}${this.pair("City / Province")}${this.pair("Postal Code")}</div></div>`)}
              ${this.group(3, "Parent/Guardian Information", [["Parent/Guardian1", "w205"], ["Parent/Guardian2", "w194"]], html`
                <div class="rows"><div class="row p1">${this.pair("First Name")}${this.pair("Home Phone")}</div>
                  <div class="row p1">${this.pair("Last Name")}${this.pair("Work Phone")}</div>
                  <div class="row p1">${this.pair("Address")}${this.pair("Cell Phone")}</div>
                  <div class="row p4">${this.pair("City / Province")}${this.pair("Postal Code")}${this.pair("Email")}</div>
                  <div class="row p1">${this.pair("Employer")}</div>
                  <div class="row p1">${this.pair("Employer Address")}</div></div>`)}
              ${this.group(4, "Contact Information", [], html``)}
            </div></div>
            <div class="scroll"><button aria-label="Scroll up">${chevron("up", 9, "#555", 2.4)}</button><div class="track"><div class="thumb"></div><div class="rest"></div></div><button aria-label="Scroll down">${chevron("down", 9, "#555", 2.4)}</button></div>
          </div>
          <div class="bottom"><button>Design</button></div>
        </div>
      </div>`;
  }
}

@customElement("app-root")
class AppRoot extends LitElement {
  static styles = [base, css`
    :host { display: flex; flex-direction: column; height: 100vh; background: #fdfdfd; overflow: hidden; }
    .main { flex: 1; min-height: 0; display: flex; padding: 3px 2px 4px; gap: 6px; }
    form-canvas { flex: 1; }
    .status { height: 33px; flex: none; background: var(--blue); color: #fff; display: flex; align-items: center; justify-content: space-between; padding: 2px 0 0 10px; }
    .where { display: flex; align-items: center; gap: 27px; align-self: stretch; }
    .where svg { align-self: flex-end; }
  `];
  render() {
    return html`<ribbon-bar></ribbon-bar>
      <main class="main"><tool-box></tool-box><form-canvas></form-canvas><doc-outline></doc-outline></main>
      <footer class="status"><span>Closed form "Child Registration Form (Tabbed)".</span>
        <span class="where"><span>Location (6, 26)</span>${icon(14, 14, svg`<path d="M9 1 h3 v3 h-3 Z M4.500 5.500 h3 v3 h-3 Z M9 5.500 h3 v3 h-3 Z M0 10 h3 v3 h-3 Z M4.500 10 h3 v3 h-3 Z M9 10 h3 v3 h-3 Z" fill="#7fb6e2"/>`)}</span></footer>`;
  }
}
